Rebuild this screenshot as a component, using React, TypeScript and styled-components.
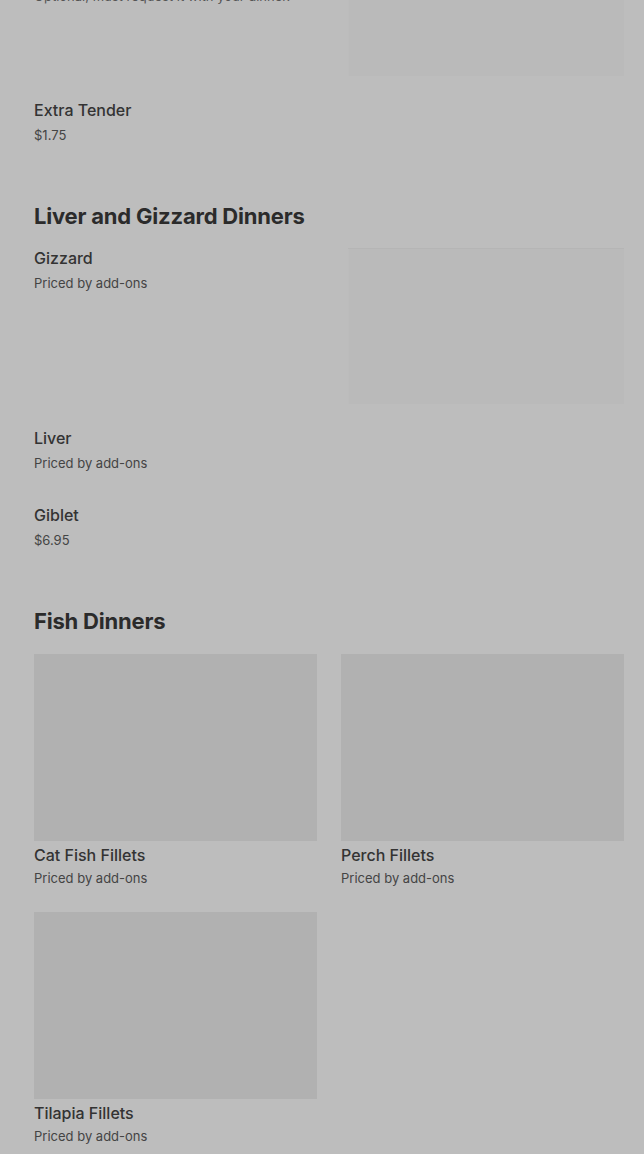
import styled, { createGlobalStyle } from "styled-components";

const GlobalStyle = createGlobalStyle`
    html, body {
        margin: 0;
        padding: 0;
        background: #bdbdbd;
        overflow: hidden;
    }
    body {
        font-family: Inter, "Noto Sans", "Liberation Sans", sans-serif;
        color: #2f2f2f;
    }
`;

type Item = {
    name: string;
    price: string;
    desc?: string;
    image?: boolean;
};

type Section = {
    title?: string;
    layout: "list" | "grid";
    items: Item[];
};

const sections: Section[] = [
    {
        layout: "list",
        items: [
            { name: "Tender", price: "$1.75", desc: "Optional, must request it with your dinner.", image: true },
            { name: "Extra Tender", price: "$1.75" },
        ],
    },
    {
        title: "Liver and Gizzard Dinners",
        layout: "list",
        items: [
            { name: "Gizzard", price: "Priced by add-ons", image: true },
            { name: "Liver", price: "Priced by add-ons" },
            { name: "Giblet", price: "$6.95" },
        ],
    },
    {
        title: "Fish Dinners",
        layout: "grid",
        items: [
            { name: "Cat Fish Fillets", price: "Priced by add-ons" },
            { name: "Perch Fillets", price: "Priced by add-ons" },
            { name: "Tilapia Fillets", price: "Priced by add-ons" },
        ],
    },
];

const Style = {
    Page: styled.main`
        display: flex;
        flex-direction: column;
        gap: 49px;
        padding: 0 20px 0 34px;
        margin-top: -80px;
    `,
    Section: styled.section`
        display: flex;
        flex-direction: column;
        gap: 18px;
    `,
    SectionTitle: styled.h2`
        margin: 0;
        font-size: 22px;
        line-height: 28px;
        font-weight: 700;
        letter-spacing: -0.2px;
        color: #2b2b2b;
    `,
    List: styled.div`
        display: flex;
        flex-direction: column;
        gap: 24px;
    `,
    Row: styled.div`
        display: flex;
        justify-content: space-between;
        gap: 24px;
    `,
    Text: styled.div`
        flex: 1;
        display: flex;
        flex-direction: column;
        min-height: 53px;
    `,
    Name: styled.div`
        font-size: 16px;
        line-height: 20px;
        font-weight: 500;
        color: #333;
    `,
    Price: styled.div<{ $gap: number }>`
        margin-top: ${({ $gap }) => $gap}px;
        font-size: 13px;
        line-height: 20px;
        color: #444;
    `,
    Desc: styled.div`
        margin-top: 22px;
        font-size: 13px;
        line-height: 18px;
        color: #555;
    `,
    Thumb: styled.div`
        flex: 0 0 276px;
        height: 156px;
        background: #bababa;
        box-shadow: inset 0 1px 0 #b5b5b5, inset 1px 0 0 #bcbcbc;
    `,
    Grid: styled.div`
        display: grid;
        grid-template-columns: 1fr 1fr;
        column-gap: 24px;
        row-gap: 24px;
        margin-top: 1px;
    `,
    Card: styled.div`
        display: flex;
        flex-direction: column;
    `,
    CardImage: styled.div`
        height: 187px;
        margin-bottom: 4px;
        background: #b1b1b1;
    `,
};

function ListItem({ item }: { item: Item }) {
    return (
        <Style.Row>
            <Style.Text>
                <Style.Name>{item.name}</Style.Name>
                <Style.Price $gap={5}>{item.price}</Style.Price>
                {item.desc && <Style.Desc>{item.desc}</Style.Desc>}
            </Style.Text>
            {item.image && <Style.Thumb />}
        </Style.Row>
    );
}

function GridItem({ item }: { item: Item }) {
    return (
        <Style.Card>
            <Style.CardImage />
            <Style.Name>{item.name}</Style.Name>
            <Style.Price $gap={3}>{item.price}</Style.Price>
        </Style.Card>
    );
}

export default function App() {
    return (
        <>
            <GlobalStyle />
            <Style.Page>
                {sections.map((section, i) => (
                    <Style.Section key={i}>
                        {section.title && <Style.SectionTitle>{section.title}</Style.SectionTitle>}
                        {section.layout === "list" ? (
                            <Style.List>
                                {section.items.map((item) => (
                                    <ListItem key={item.name} item={item} />
                                ))}
                            </Style.List>
                        ) : (
                            <Style.Grid>
                                {section.items.map((item) => (
                                    <GridItem key={item.name} item={item} />
                                ))}
                            </Style.Grid>
                        )}
                    </Style.Section>
                ))}
            </Style.Page>
        </>
    );
}
